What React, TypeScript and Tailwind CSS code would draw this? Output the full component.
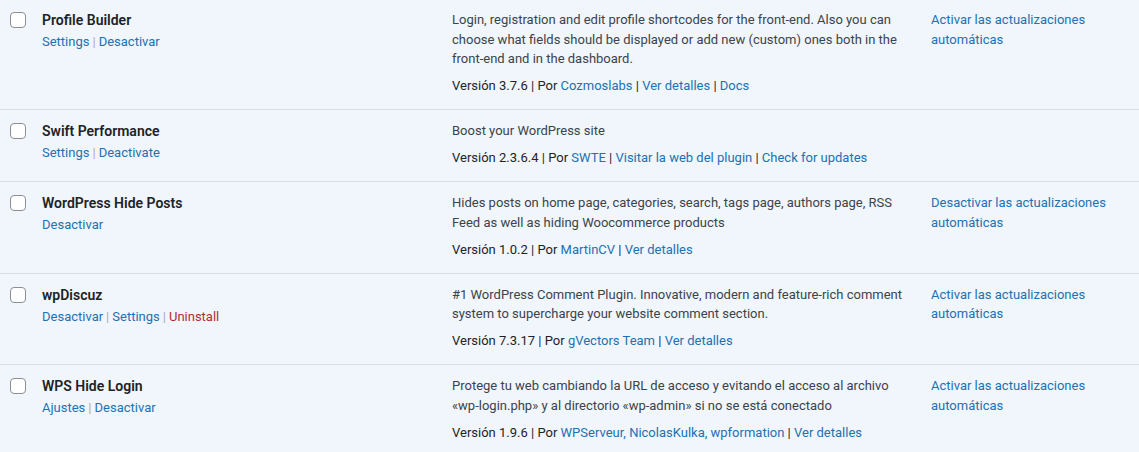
import React from 'react';

type Action = { label: string; danger?: boolean };
type Meta = { text: string; link?: boolean };

type Plugin = {
  name: string;
  actions: Action[];
  description: string[];
  version: string;
  meta: Meta[];
  autoUpdate?: string;
};

const plugins: Plugin[] = [
  {
    name: 'Profile Builder',
    actions: [{ label: 'Settings' }, { label: 'Desactivar' }],
    description: [
      'Login, registration and edit profile shortcodes for the front-end. Also you can',
      'choose what fields should be displayed or add new (custom) ones both in the',
      'front-end and in the dashboard.',
    ],
    version: '3.7.6',
    meta: [{ text: 'Cozmoslabs', link: true }, { text: 'Ver detalles', link: true }, { text: 'Docs', link: true }],
    autoUpdate: 'Activar las actualizaciones automáticas',
  },
  {
    name: 'Swift Performance',
    actions: [{ label: 'Settings' }, { label: 'Deactivate' }],
    description: ['Boost your WordPress site'],
    version: '2.3.6.4',
    meta: [
      { text: 'SWTE', link: true },
      { text: 'Visitar la web del plugin', link: true },
      { text: 'Check for updates', link: true },
    ],
  },
  {
    name: 'WordPress Hide Posts',
    actions: [{ label: 'Desactivar' }],
    description: [
      'Hides posts on home page, categories, search, tags page, authors page, RSS',
      'Feed as well as hiding Woocommerce products',
    ],
    version: '1.0.2',
    meta: [{ text: 'MartinCV', link: true }, { text: 'Ver detalles', link: true }],
    autoUpdate: 'Desactivar las actualizaciones automáticas',
  },
  {
    name: 'wpDiscuz',
    actions: [{ label: 'Desactivar' }, { label: 'Settings' }, { label: 'Uninstall', danger: true }],
    description: [
      '#1 WordPress Comment Plugin. Innovative, modern and feature-rich comment',
      'system to supercharge your website comment section.',
    ],
    version: '7.3.17',
    meta: [{ text: 'gVectors Team', link: true }, { text: 'Ver detalles', link: true }],
    autoUpdate: 'Activar las actualizaciones automáticas',
  },
  {
    name: 'WPS Hide Login',
    actions: [{ label: 'Ajustes' }, { label: 'Desactivar' }],
    description: [
      'Protege tu web cambiando la URL de acceso y evitando el acceso al archivo',
      '«wp-login.php» y al directorio «wp-admin» si no se está conectado',
    ],
    version: '1.9.6',
    meta: [
      { text: 'WPServeur, NicolasKulka, wpformation', link: true },
      { text: 'Ver detalles', link: true },
    ],
    autoUpdate: 'Activar las actualizaciones automáticas',
  },
];

function PluginRow({ plugin }: { plugin: Plugin }) {
  return (
    <div className="grid grid-cols-[42px_410px_479px_1fr] border-b border-[#dcdcde] bg-[#f0f6fc] pt-[11px] pb-[13.5px]">
      <div className="pl-[10px] pt-[2px]">
        <span className="block h-4 w-4 rounded-[4px] border border-[#8c8f94] bg-white" />
      </div>

      <div>
        <div className="text-[14px] font-semibold leading-[20px] text-[#1d2327]">{plugin.name}</div>
        <div className="mt-[2px] text-[13px] leading-[20px] text-[#2271b1]">
          {plugin.actions.map((a, i) => (
            <span key={a.label}>
              {i > 0 && <span className="px-[3px] text-[#a7aaad]">|</span>}
              <a className={a.danger ? 'text-[#b32d2e]' : 'text-[#2271b1]'}>{a.label}</a>
            </span>
          ))}
        </div>
      </div>

      <div className="pr-5 text-[13px] leading-[19.5px]">
        <p className="text-[#3c434a]">
          {plugin.description.map((line, i) => (
            <span key={i} className="block whitespace-nowrap">
              {line}
            </span>
          ))}
        </p>
        <div className="mt-[7.5px] whitespace-nowrap text-[#1d2327]">
          Versión {plugin.version} | Por{' '}
          {plugin.meta.map((m, i) => (
            <span key={m.text}>
              {i > 0 && ' | '}
              <a className={m.link ? 'text-[#2271b1]' : ''}>{m.text}</a>
            </span>
          ))}
        </div>
      </div>

      <div className="pr-2 text-[13px] leading-[19.5px] text-[#2271b1]">
        {plugin.autoUpdate && <a className="block w-[190px]">{plugin.autoUpdate}</a>}
      </div>
    </div>
  );
}

export default function App() {
  return (
    <div className="h-[452px] w-[1139px] overflow-hidden bg-[#f0f6fc] font-['Segoe_UI',Roboto,sans-serif]">
      <div className="-mt-[1px]">
        {plugins.map((p) => (
          <PluginRow key={p.name} plugin={p} />
        ))}
      </div>
    </div>
  );
}
